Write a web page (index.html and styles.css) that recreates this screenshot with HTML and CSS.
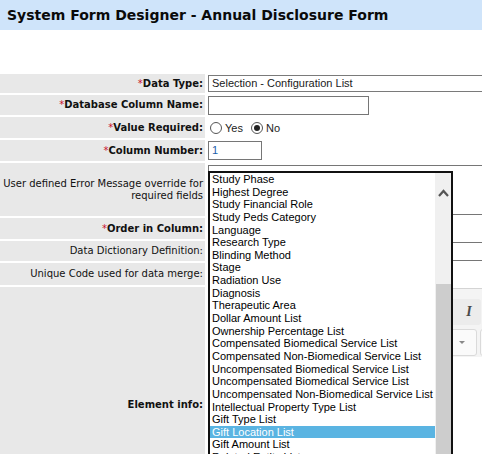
FILE: index.html
```html
<!DOCTYPE html>
<html lang="en">
<head>
  <meta charset="UTF-8">
  <title>System Form Designer</title>
  <link rel="stylesheet" href="styles.css">
</head>
<body>

<div class="page-title">System Form Designer - Annual Disclosure Form</div>

<div class="form">
  <div class="row r1">
    <div class="label req-label"><span class="req">*</span>Data Type:</div>
    <div class="value"><div class="readonly-box">Selection - Configuration List</div></div>
  </div>
  <div class="row r2">
    <div class="label req-label"><span class="req">*</span>Database Column Name:</div>
    <div class="value"><div class="text-input col-name"></div></div>
  </div>
  <div class="row r3">
    <div class="label req-label"><span class="req">*</span>Value Required:</div>
    <div class="value radios">
      <span class="radio"></span><span class="radio-text">Yes</span>
      <span class="radio checked"></span><span class="radio-text">No</span>
    </div>
  </div>
  <div class="row r4">
    <div class="label req-label"><span class="req">*</span>Column Number:</div>
    <div class="value"><div class="text-input col-number">1</div></div>
  </div>
  <div class="row r5">
    <div class="label">User defined Error Message override for required fields</div>
    <div class="value"><div class="textarea"></div></div>
  </div>
  <div class="row r6">
    <div class="label req-label"><span class="req">*</span>Order in Column:</div>
    <div class="value"><div class="text-input col-number"></div></div>
  </div>
  <div class="row r7">
    <div class="label">Data Dictionary Definition:</div>
    <div class="value"><div class="text-input wide"></div></div>
  </div>
  <div class="row r8">
    <div class="label">Unique Code used for data merge:</div>
    <div class="value"><div class="text-input col-number"></div></div>
  </div>
  <div class="row r9">
    <div class="label req-label">Element info:</div>
    <div class="value">
      <div class="editor">
        <div class="toolbar">
          <div class="tool-group">
            <span class="tool bold-tool">B</span>
            <span class="tool italic-tool">I</span>
          </div>
        </div>
        <div class="toolbar">
          <div class="combo"><span class="combo-arrow"></span></div>
          <div class="combo small"></div>
        </div>
      </div>
    </div>
  </div>
</div>

<div class="picker">
  <div class="options" id="options"></div>
  <div class="scrollbar">
    <svg class="chevron" width="11" height="8" viewBox="0 0 11 8">
      <path d="M1 7 L5.5 2 L10 7" fill="none" stroke="#555" stroke-width="2.2"/>
    </svg>
    <div class="thumb"></div>
  </div>
</div>

<script>
  const lists = [
    'Study Phase', 'Highest Degree', 'Study Financial Role', 'Study Peds Category',
    'Language', 'Research Type', 'Blinding Method', 'Stage', 'Radiation Use',
    'Diagnosis', 'Therapeutic Area', 'Dollar Amount List', 'Ownership Percentage List',
    'Compensated Biomedical Service List', 'Compensated Non-Biomedical Service List',
    'Uncompensated Biomedical Service List', 'Uncompensated Biomedical Service List',
    'Uncompensated Non-Biomedical Service List', 'Intellectual Property Type List',
    'Gift Type List', 'Gift Location List', 'Gift Amount List', 'Related Entity List'
  ];

  const options = document.getElementById('options');
  lists.forEach(name => {
    const item = document.createElement('div');
    item.classList.add('option');
    if (name === 'Gift Location List') item.classList.add('selected');
    item.textContent = name;
    options.appendChild(item);
  });
</script>

</body>
</html>
```

FILE: styles.css
```css
html, body {
  overflow: hidden;
}
body {
  margin: 0;
  font-family: "DejaVu Sans", Verdana, sans-serif;
  font-size: 10px;
  color: #000;
  background-color: #fff;
  position: relative;
  height: 454px;
}
.page-title {
  height: 30px;
  line-height: 30px;
  padding-left: 7px;
  background-color: #cfe4fa;
  font-size: 14px;
  font-weight: bold;
  color: #0a0a0a;
  white-space: nowrap;
}
.form {
  margin-top: 44px;
  display: flex;
  flex-direction: column;
  gap: 2px;
  height: 380px;
  overflow: hidden;
}
.row {
  display: grid;
  grid-template-columns: 205px 1fr;
  column-gap: 2px;
  flex-shrink: 0;
}
.r1 { height: 19px; }
.r2 { height: 20px; }
.r3 { height: 21px; }
.r4 { height: 21px; }
.r5 { height: 53px; }
.r6 { height: 21px; }
.r7 { height: 20px; }
.r8 { height: 22px; }
.r9 { height: 236px; }
.label {
  background-color: #e8e8e8;
  display: flex;
  align-items: center;
  justify-content: flex-end;
  text-align: right;
  padding-right: 2px;
  line-height: 12px;
  color: #111;
}
.r5 .label {
  padding-top: 1px;
}
.req-label {
  font-weight: bold;
}
.req {
  color: #c8102e;
  font-weight: normal;
}
.value {
  padding-left: 1px;
  font-family: "Liberation Sans", Arial, sans-serif;
  font-size: 11px;
  white-space: nowrap;
  overflow: hidden;
}
.readonly-box {
  margin-top: 1px;
  width: 320px;
  height: 17px;
  box-sizing: border-box;
  border: 1px solid #7a7a7a;
  padding-left: 3px;
  line-height: 15px;
  color: #1a1a1a;
}
.text-input {
  margin-top: 1px;
  height: 19px;
  box-sizing: border-box;
  border: 1px solid #767676;
  padding-left: 3px;
  line-height: 17px;
}
.col-name {
  width: 161px;
}
.col-number {
  width: 54px;
  color: #1d5ea8;
}
.wide {
  width: 320px;
}
.radios {
  display: flex;
  align-items: center;
  padding-left: 3px;
  color: #222;
}
.radio {
  width: 12px;
  height: 12px;
  box-sizing: border-box;
  border: 1px solid #555;
  border-radius: 50%;
  position: relative;
}
.radio.checked::after {
  content: "";
  position: absolute;
  left: 2px;
  top: 2px;
  width: 6px;
  height: 6px;
  border-radius: 50%;
  background-color: #222;
}
.radio-text {
  margin: 0 8px 0 3px;
}
.textarea {
  margin-top: 2px;
  width: 320px;
  height: 50px;
  box-sizing: border-box;
  border: 1px solid #767676;
}
.editor {
  margin-top: 1px;
  width: 340px;
  border-top: 1px solid #d4d4d4;
  padding-top: 8px;
  background-color: #f4f4f4;
}
.toolbar {
  display: flex;
  padding-left: 225px;
  height: 30px;
  align-items: center;
  gap: 3px;
}
.tool-group {
  display: flex;
  background-color: #ececec;
  border-radius: 3px;
  height: 26px;
  align-items: center;
}
.tool {
  width: 24px;
  text-align: center;
  font-family: "Liberation Serif", serif;
  font-size: 14px;
  font-weight: bold;
  color: #4a4a4a;
}
.italic-tool {
  font-style: italic;
}
.combo {
  margin-left: -70px;
  width: 114px;
  height: 27px;
  box-sizing: border-box;
  background-color: #fafafa;
  border: 1px solid #dadada;
  border-radius: 3px;
  position: relative;
}
.combo-arrow {
  position: absolute;
  right: 11px;
  top: 11px;
  border-left: 3px solid transparent;
  border-right: 3px solid transparent;
  border-top: 3px solid #888;
}
.combo.small {
  margin-left: 0;
  width: 40px;
}
.picker {
  position: absolute;
  left: 208px;
  top: 171px;
  width: 245px;
  height: 283px;
  box-sizing: border-box;
  border: 2px solid #111;
  border-bottom: none;
  background-color: #fff;
  display: flex;
  overflow: hidden;
  font-family: "Liberation Sans", Arial, sans-serif;
  font-size: 11px;
}
.options {
  flex: 1;
  overflow: hidden;
}
.option {
  height: 12.65px;
  line-height: 12.65px;
  padding-left: 2px;
  white-space: nowrap;
  color: #000;
}
.option.selected {
  background-color: #5ab4e2;
  color: #fff;
}
.scrollbar {
  width: 16px;
  background-color: #f0f0f0;
  display: flex;
  flex-direction: column;
  align-items: center;
}
.chevron {
  margin-top: 16px;
  flex-shrink: 0;
}
.thumb {
  margin-top: 87px;
  width: 15px;
  flex: 1;
  background-color: #cdcdcd;
}
```
